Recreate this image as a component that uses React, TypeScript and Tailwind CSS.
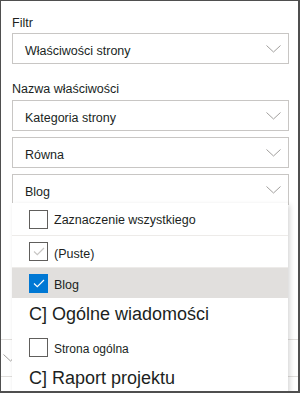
import React from "react";

const font = { fontFamily: '"Liberation Sans", Arial, sans-serif' };

function Chevron({ className = "" }: { className?: string }) {
	return (
		<svg width="15" height="8" viewBox="0 0 15 8" className={className}>
			<path d="M0.5 0.5 L7.5 7 L14.5 0.5" fill="none" stroke="#a19f9d" strokeWidth="1" />
		</svg>
	);
}

function Select({ value }: { value: string }) {
	return (
		<div className="flex items-center justify-between h-[31px] border border-[#c8c6c4] bg-white pl-[12px] pr-[7px]">
			<span className="text-[12.5px] text-[#201f1e] pt-[6px]">{value}</span>
			<Chevron />
		</div>
	);
}

function Checkbox({ state }: { state: "empty" | "dim" | "checked" }) {
	if (state === "checked") {
		return (
			<div className="size-[19px] bg-[#0078d4] flex items-center justify-center">
				<svg width="12" height="9" viewBox="0 0 12 9">
					<path d="M1 4.5 L4.3 7.7 L11 1" fill="none" stroke="white" strokeWidth="1.2" />
				</svg>
			</div>
		);
	}
	return (
		<div className="size-[19px] border border-[#605e5c] bg-white flex items-center justify-center">
			{state === "dim" && (
				<svg width="12" height="9" viewBox="0 0 12 9">
					<path d="M1 4.5 L4.3 7.7 L11 1" fill="none" stroke="#c8c6c4" strokeWidth="1.2" />
				</svg>
			)}
		</div>
	);
}

export default function App() {
	return (
		<div
			className="relative w-[300px] h-[393px] overflow-hidden bg-white border-l border-t border-r-2 border-b-2 border-[#4f4f4f]"
			style={font}
		>
			<div className="pl-[11px] pr-[9px] pt-[14px]">
				<div className="text-[12.5px] text-[#201f1e] leading-[16px] mb-[2px]">Filtr</div>
				<Select value="Właściwości strony" />
				<div className="text-[12.5px] text-[#201f1e] leading-[16px] mt-[17px] mb-[3px]">
					Nazwa właściwości
				</div>
				<div className="flex flex-col gap-[6px]">
					<Select value="Kategoria strony" />
					<Select value="Równa" />
					<Select value="Blog" />
				</div>
				<div className="flex flex-col -mx-[11px]">
					<div className="h-[135px] border-b border-[#e1dfdd]" />
					<div className="h-[37px] border-b border-[#e1dfdd] flex items-center pl-[2px]">
						<Chevron />
					</div>
				</div>
			</div>

			<div className="absolute left-[11px] top-[202px] w-[276px] bg-white shadow-[2px_2px_5px_rgba(0,0,0,0.16)] text-[#201f1e]">
				<div className="h-[33px] flex items-center gap-[6px] pl-[17px] border-b border-[#edebe9]">
					<Checkbox state="empty" />
					<span className="text-[12.5px] mt-[3px]">Zaznaczenie wszystkiego</span>
				</div>
				<div className="h-[32px] flex items-center gap-[6px] pl-[17px] border-b border-[#edebe9]">
					<Checkbox state="dim" />
					<span className="text-[12.5px] mt-[6px]">(Puste)</span>
				</div>
				<div className="h-[30px] flex items-center gap-[6px] pl-[17px] bg-[#e1dfdd]">
					<Checkbox state="checked" />
					<span className="text-[12.5px] mt-[4px]">Blog</span>
				</div>
				<div className="h-[32px] flex items-center pl-[17px] text-[18px]">C] Ogólne wiadomości</div>
				<div className="h-[34px] flex items-center gap-[6px] pl-[17px]">
					<Checkbox state="empty" />
					<span className="text-[12px] mt-[3px]">Strona ogólna</span>
				</div>
				<div className="h-[28px] flex items-center pl-[17px] text-[18px]">C] Raport projektu</div>
			</div>
		</div>
	);
}
